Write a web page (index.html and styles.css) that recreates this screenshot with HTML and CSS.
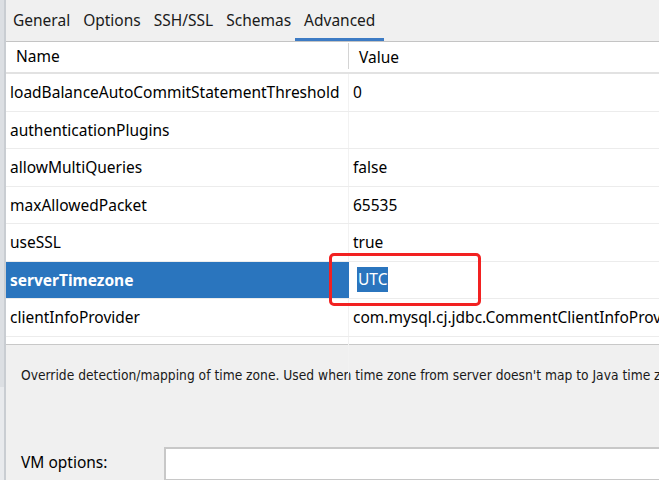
FILE: index.html
```html
<!DOCTYPE html>
<html lang="en">
<head>
    <meta charset="UTF-8">
    <title>Data Source Properties - Advanced</title>
    <link rel="stylesheet" href="styles.css">
</head>
<body>
    <div class="frame">
        <div class="side-strip"></div>
        <div class="main">
            <div class="tabs">
                <div class="tab">General</div>
                <div class="tab">Options</div>
                <div class="tab">SSH/SSL</div>
                <div class="tab">Schemas</div>
                <div class="tab active">Advanced</div>
            </div>

            <div class="table-wrap">
                <div class="row head">
                    <div class="cell name">Name</div>
                    <div class="cell value">Value</div>
                </div>
                <div class="row">
                    <div class="cell name">loadBalanceAutoCommitStatementThreshold</div>
                    <div class="cell value">0</div>
                </div>
                <div class="row">
                    <div class="cell name">authenticationPlugins</div>
                    <div class="cell value"></div>
                </div>
                <div class="row">
                    <div class="cell name">allowMultiQueries</div>
                    <div class="cell value">false</div>
                </div>
                <div class="row">
                    <div class="cell name">maxAllowedPacket</div>
                    <div class="cell value">65535</div>
                </div>
                <div class="row">
                    <div class="cell name">useSSL</div>
                    <div class="cell value">true</div>
                </div>
                <div class="row selected">
                    <div class="cell name">serverTimezone</div>
                    <div class="cell value editing"><span class="sel-text">UTC</span></div>
                </div>
                <div class="row">
                    <div class="cell name">clientInfoProvider</div>
                    <div class="cell value">com.mysql.cj.jdbc.CommentClientInfoProvider</div>
                </div>
                <div class="row empty">
                    <div class="cell name"></div>
                    <div class="cell value"></div>
                </div>
                <!-- annotation box drawn on top of the screenshot -->
                <div class="mark"></div>
            </div>

            <div class="bottom">
                <p class="desc">Override detection/mapping of time zone. Used when time zone from server doesn't map to Java time zone</p>
                <div class="vm-row">
                    <label for="vm">VM options:</label>
                    <input id="vm" type="text">
                </div>
            </div>
        </div>
    </div>
</body>
</html>
```

FILE: styles.css
```css
:root {
    --panel: #f0f0f0;
    --text: #000000;
    --line: #ececec;
    --select: #2a75be;
    --tab-line: #3d7bc4;
}

body {
    margin: 0;
    font-family: "Noto Sans", "Open Sans", sans-serif;
    font-size: 15.5px;
    color: var(--text);
    background: var(--panel);
}

.frame {
    display: flex;
    width: 659px;
    height: 480px;
    overflow: hidden;
}

.side-strip {
    width: 4px;
    flex: none;
    background: linear-gradient(#dcdfe3 0, #dcdfe3 387px, #e8eaed 387px);
    border-right: 2px solid #c9cdd2;
}

.main {
    flex: 1;
    display: flex;
    flex-direction: column;
    min-width: 0;
}

.tabs {
    display: flex;
    height: 41px;
    flex: none;
    background: var(--panel);
    border-bottom: 1px solid #c4c4c4;
}

.tab {
    padding: 0 6px 0 7px;
    line-height: 40px;
    white-space: nowrap;
    color: #1a1a1a;
}

.tab.active {
    padding: 0 9px;
    margin-left: -2px;
    box-shadow: inset 0 -3px 0 var(--tab-line);
}

.table-wrap {
    position: relative;
    background: #ffffff;
    height: 302px;
    flex: none;
    border-bottom: 1px solid #c8c8c8;
}

.row {
    display: flex;
    height: 37.5px;
    border-bottom: 1px solid var(--line);
    box-sizing: border-box;
}

.row.head {
    height: 32px;
    border-bottom: 2px solid #e2e2e2;
}

.row.empty {
    border-bottom: none;
}

.cell {
    display: flex;
    align-items: center;
    white-space: nowrap;
    overflow: hidden;
}

.cell.name {
    width: 343px;
    flex: none;
    padding-left: 4px;
    box-sizing: border-box;
    border-right: 1px solid #f2f2f2;
}

.cell.value {
    flex: 1;
    padding-left: 4px;
}

.head .cell.name {
    padding-left: 10px;
    border-right: 1px solid #d4d4d4;
    margin: 1px 0 3px;
}

.head .cell.value {
    padding-left: 10px;
}

.selected .cell.name {
    background: var(--select);
    color: #ffffff;
    font-weight: 700;
    border-right: none;
}

.cell.editing {
    padding-left: 8px;
}

.sel-text {
    background: var(--select);
    color: #ffffff;
    padding: 1px 1px 2px;
}

.mark {
    position: absolute;
    left: 323px;
    top: 211px;
    width: 146px;
    height: 47px;
    border: 3px solid #f22121;
    border-radius: 5px;
}

.bottom {
    flex: 1;
    padding: 0 0 0 15px;
    background: var(--panel);
}

.desc {
    margin: 22px 0 0;
    font-family: "DejaVu Sans Condensed", "DejaVu Sans", sans-serif;
    font-stretch: condensed;
    font-size: 13.7px;
    line-height: 17px;
    white-space: nowrap;
    color: #1a1a1a;
}

.vm-row {
    display: flex;
    align-items: flex-start;
    margin-top: 63px;
}

.vm-row label {
    width: 143px;
    flex: none;
    line-height: 30px;
}

.vm-row input {
    flex: 1;
    height: 34px;
    border: 2px solid #c8c8c8;
    border-right: none;
    background: #ffffff;
    padding: 0;
    box-sizing: border-box;
}
```
